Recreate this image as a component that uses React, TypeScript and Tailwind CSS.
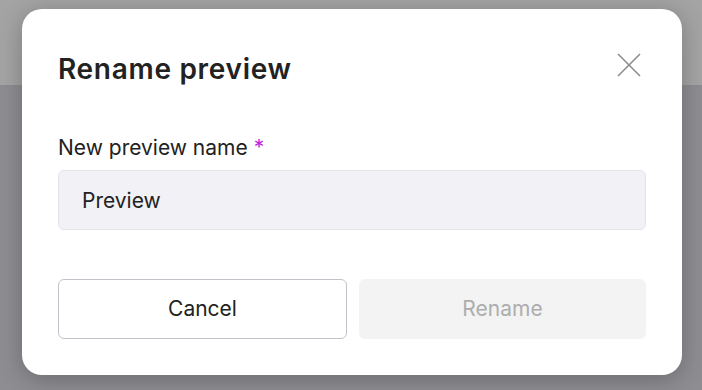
export default function App() {
  return (
    <div className="relative h-[390px] w-full overflow-hidden font-['Inter',sans-serif]">
      {/* dimmed page behind the dialog */}
      <div className="flex h-full flex-col">
        <div className="h-[85px] bg-[#a4a4a4]" />
        <div className="flex-1 bg-[#8e8d92]" />
      </div>

      <div className="absolute left-[22px] top-[9px] w-[660px] rounded-[20px] bg-white px-9 pb-9 pt-[37px] shadow-[0_4px_24px_rgba(0,0,0,0.25)]">
        <div className="flex items-center justify-between">
          <h2 className="text-[28px] font-semibold leading-[46px] tracking-[0.7px] text-[#222222]">
            Rename preview
          </h2>
          <button className="mr-[1px] -mt-[8px] flex h-8 w-8 items-center justify-center text-[#8c8c8c]">
            <svg width="26" height="26" viewBox="0 0 26 26" fill="none" stroke="currentColor" strokeWidth="1.6">
              <line x1="2" y1="2" x2="24" y2="24" />
              <line x1="24" y1="2" x2="2" y2="24" />
            </svg>
          </button>
        </div>

        <label className="mt-[42px] block text-[21px] leading-[28px] text-[#222222]">
          New preview name <span className="text-[#c01fe0]">*</span>
        </label>
        <input
          defaultValue="Preview"
          className="mt-[8px] block h-[60px] w-full rounded-[6px] border border-[#e3e2e8] bg-[#f2f1f6] pl-[23px] text-[21px] text-[#222222] outline-none"
        />

        <div className="mt-[49px] flex gap-3">
          <button className="h-[60px] flex-1 rounded-[6px] border border-[#c3c2cb] bg-white text-[21px] text-[#222222]">
            Cancel
          </button>
          <button className="h-[60px] flex-1 rounded-[6px] bg-[#f3f3f3] text-[21px] text-[#adadad]">
            Rename
          </button>
        </div>
      </div>
    </div>
  );
}
